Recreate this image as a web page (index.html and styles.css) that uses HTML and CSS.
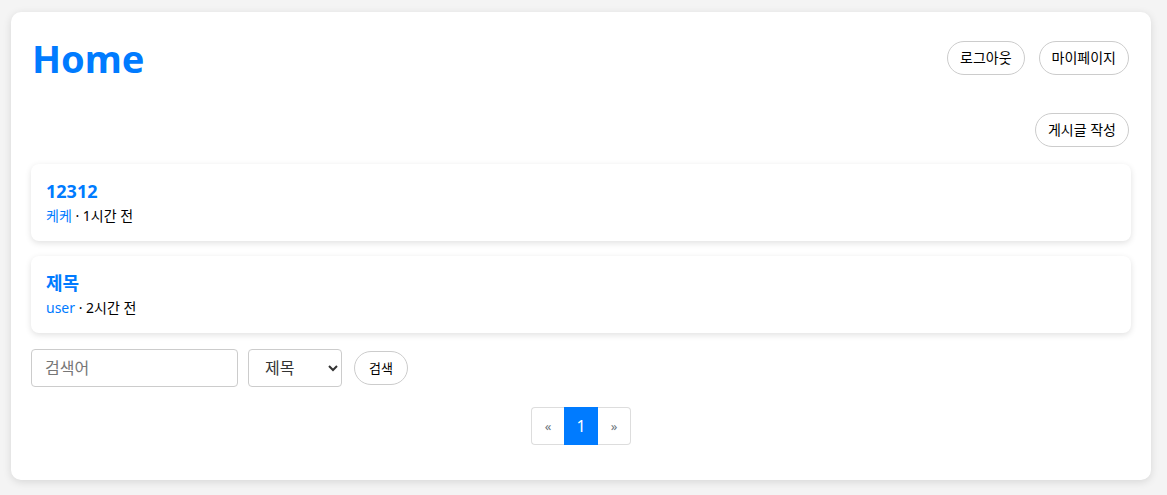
FILE: index.html
```html
<!DOCTYPE html>
<html lang="ko">
<head>
<meta charset="utf-8">
<title>Home</title>
<link rel="stylesheet" href="styles.css">
</head>
<body>
<div class="container">
  <header class="header">
    <h1 class="title">Home</h1>
    <div class="header-actions">
      <button class="pill">로그아웃</button>
      <button class="pill">마이페이지</button>
    </div>
  </header>
  <div class="write-row">
    <button class="pill">게시글 작성</button>
  </div>
  <div class="post">
    <div class="post-title">12312</div>
    <div class="post-meta"><span class="author">케케</span> · 1시간 전</div>
  </div>
  <div class="post">
    <div class="post-title">제목</div>
    <div class="post-meta"><span class="author">user</span> · 2시간 전</div>
  </div>
  <form class="search">
    <input class="search-input" type="text" placeholder="검색어">
    <select class="search-select"><option>제목</option><option>작성자</option></select>
    <button type="button" class="pill small">검색</button>
  </form>
  <nav class="pagination">
    <a class="page">«</a>
    <a class="page active">1</a>
    <a class="page">»</a>
  </nav>
</div>
</body>
</html>
```
FILE: styles.css
```css
* { box-sizing: border-box; }
body {
  margin: 0;
  background: #f4f4f4;
  font-family: "Noto Sans", "Noto Sans CJK KR", sans-serif;
  color: #000;
  padding: 12px 16px 15px 11px;
}
.container {
  background: #fff;
  border-radius: 10px;
  box-shadow: 0 2px 8px rgba(0,0,0,0.12);
  padding: 20px 20px 35px 20px;
}
.header {
  display: flex;
  justify-content: space-between;
  align-items: center;
  padding-top: 3px;
}
.title {
  margin: 0 0 0 1px;
  font-size: 38px;
  font-weight: 700;
  color: #007bff;
  line-height: 46px;
}
.header-actions { display: flex; gap: 14px; margin-right: 2px; }
.pill {
  font-family: inherit;
  font-size: 14px;
  background: #fff;
  border: 1px solid #ccc;
  border-radius: 17px;
  height: 34px;
  padding: 0 12px;
  color: #000;
  line-height: 1;
}
.pill.small { font-size: 13px; padding: 0 14px; }
.write-row {
  display: flex;
  justify-content: flex-end;
  margin-top: 32px;
  margin-right: 2px;
  margin-bottom: 17px;
}
.post {
  background: #fff;
  border-radius: 8px;
  box-shadow: 0 2px 6px rgba(0,0,0,0.12);
  padding: 14px 15px 15px;
  margin-bottom: 15px;
}
.post + .post { margin-bottom: 16px; }
.post-title {
  font-size: 18px;
  font-weight: 700;
  color: #007bff;
  line-height: 26px;
}
.post-meta {
  font-size: 14px;
  margin-top: 2px;
  line-height: 20px;
}
.author { color: #007bff; }
.search {
  display: flex;
  align-items: center;
  gap: 10px;
  margin-bottom: 20px;
}
.search-input {
  width: 207px;
  height: 38px;
  border: 1px solid #ccc;
  border-radius: 4px;
  padding: 0 13px;
  font-family: inherit;
  font-size: 16px;
}
.search-input::placeholder { color: #777; }
.search-select {
  width: 94px;
  height: 38px;
  border: 1px solid #ccc;
  border-radius: 4px;
  padding: 0 12px;
  font-family: inherit;
  font-size: 16px;
  color: #333;
  background: #fff;
  margin-right: 2px;
}
.pagination { display: flex; justify-content: center; }
.page {
  display: flex;
  align-items: center;
  justify-content: center;
  width: 33px;
  height: 38px;
  border: 1px solid #ddd;
  font-size: 13px;
  color: #6c757d;
}
.page:first-child { border-radius: 4px 0 0 4px; border-right: none; }
.page:last-child { border-radius: 0 4px 4px 0; border-left: none; }
.page.active {
  background: #007bff;
  border-color: #007bff;
  color: #fff;
  font-size: 16px;
  width: 34px;
}
```
